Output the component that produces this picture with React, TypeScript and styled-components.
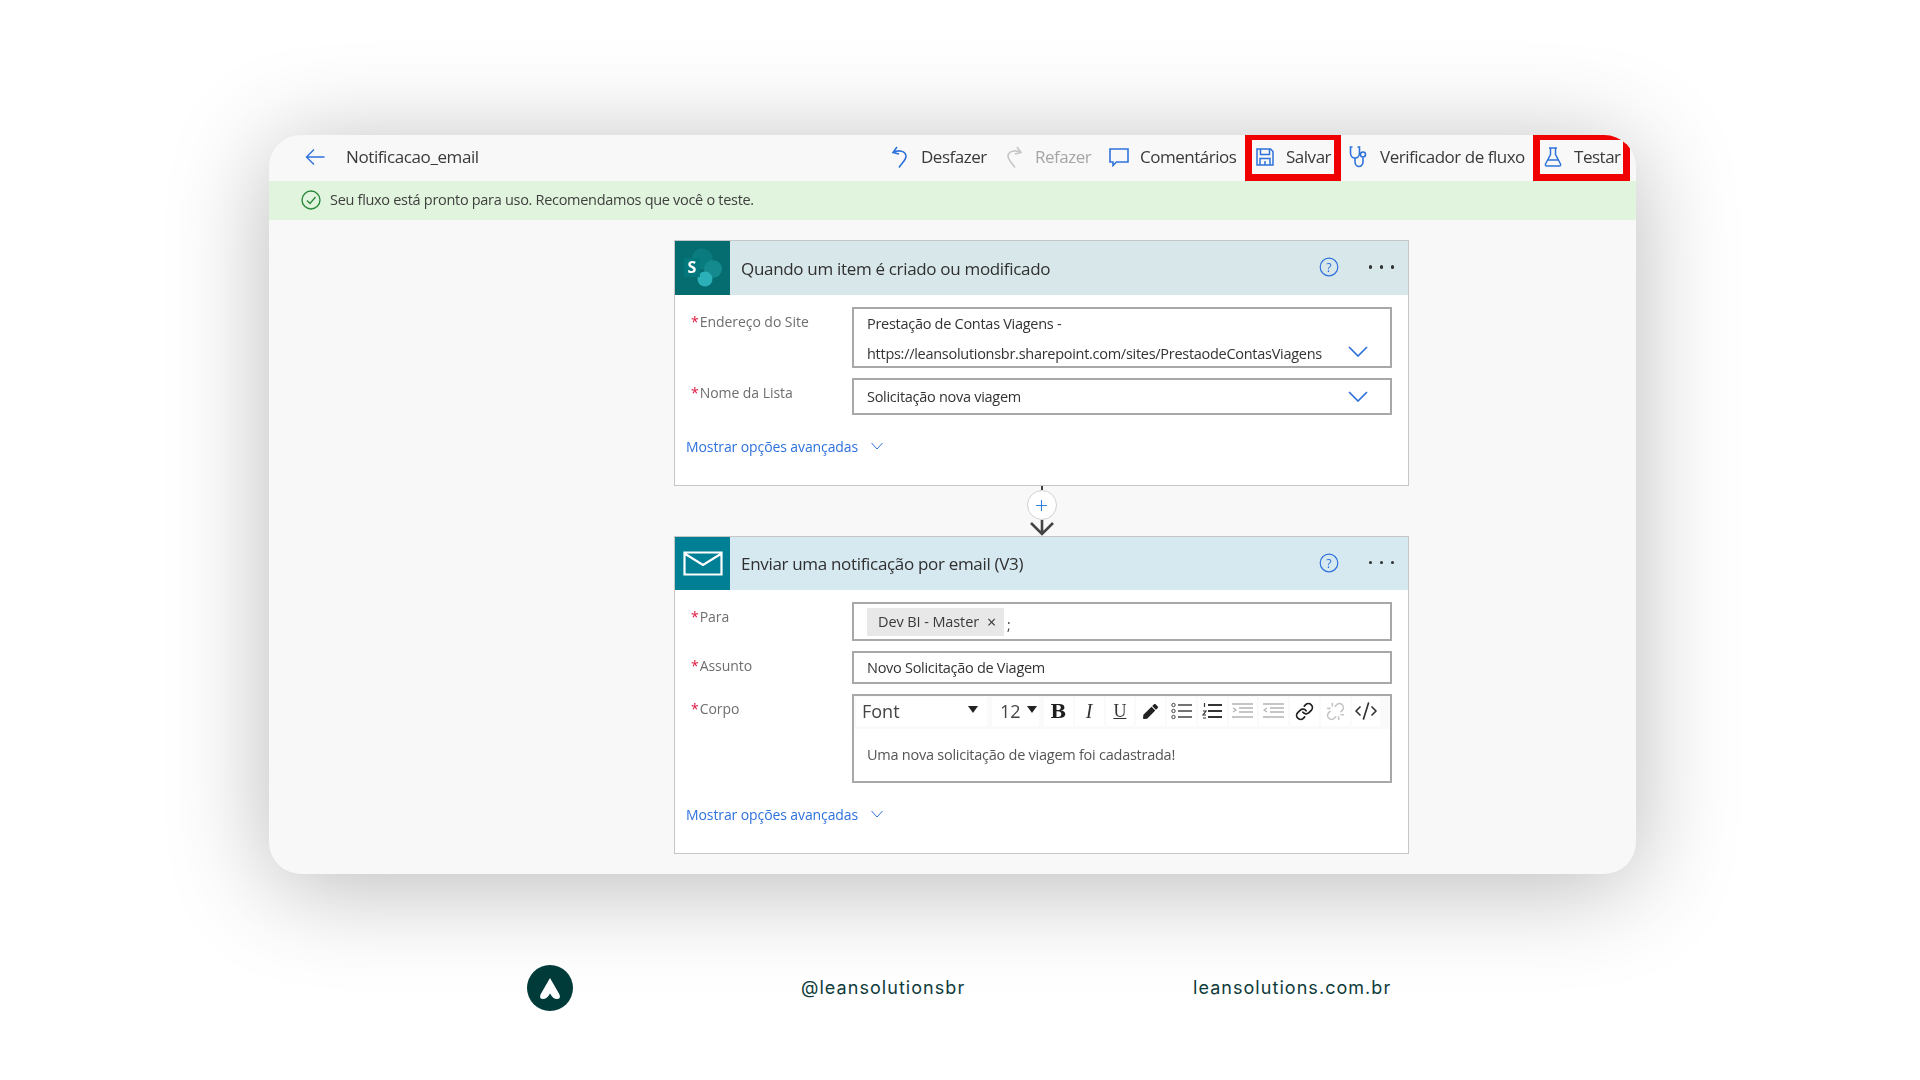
import styled, { createGlobalStyle } from "styled-components";
import { Link, Unlink, CodeXml, Plus } from "lucide-react";
import { FaPen } from "react-icons/fa";

const GlobalStyle = createGlobalStyle`
  html, body {
    margin: 0;
    background: #fff;
  }
  * {
    box-sizing: border-box;
  }
`;

const BLUE = "#2f72dc";

export default function App() {
  return (
    <Page>
      <GlobalStyle />
      <Panel>
        <Inner>
          <Toolbar>
            <BackButton>
              <svg width="20" height="18" viewBox="0 0 20 18" fill="none" stroke={BLUE} strokeWidth="1.4">
                <path d="M19.5 9H1.5M9 1.5 1.5 9 9 16.5" />
              </svg>
            </BackButton>
            <FlowName>Notificacao_email</FlowName>
            <Actions>
              <ToolButton>
                <ToolIcon>
                  <svg width="20" height="24" viewBox="0 0 20 24" fill="none" stroke={BLUE} strokeWidth="1.6">
                    <path d="M7 2 3 7.500l6 1.500M3.500 7.500c5-3 12-1.500 12.500 3.500.3 3.500-4 7-7 11.500" />
                  </svg>
                </ToolIcon>
                <ToolLabel $w={64}>Desfazer</ToolLabel>
              </ToolButton>
              <ToolButton $gap={19}>
                <ToolIcon>
                  <svg width="20" height="24" viewBox="0 0 20 24" fill="none" stroke="#c6c6c6" strokeWidth="1.6">
                    <path d="M13 2l4 5.500-6 1.500M16.500 7.500c-5-3-12-1.500-12.500 3.500-.3 3.500 4 7 7 11.500" />
                  </svg>
                </ToolIcon>
                <ToolLabel $w={56} $muted>Refazer</ToolLabel>
              </ToolButton>
              <ToolButton $gap={18}>
                <ToolIcon>
                  <svg width="20" height="20" viewBox="0 0 20 20" fill="none" stroke={BLUE} strokeWidth="1.6">
                    <path d="M1 2h18v13H7.500L4 18.500V15H1z" />
                  </svg>
                </ToolIcon>
                <ToolLabel $w={95}>Comentários</ToolLabel>
              </ToolButton>
              <ToolButton $gap={10} $marked>
                <ToolIcon>
                  <svg width="18" height="18" viewBox="0 0 18 18" fill="none" stroke={BLUE} strokeWidth="1.5">
                    <path d="M1 1h13.500L17 3.500V17H1zM4.500 1v5.500h9V1M4 17v-6.500h10V17M9 13v4" />
                  </svg>
                </ToolIcon>
                <ToolLabel $w={44}>Salvar</ToolLabel>
              </ToolButton>
              <ToolButton $gap={8}>
                <ToolIcon>
                  <svg width="20" height="22" viewBox="0 0 20 22" fill="none" stroke={BLUE} strokeWidth="1.6">
                    <path d="M3.500 1H1.500v6c0 3 2 5 4.500 5s4.500-2 4.500-5V1H8.500M6 12v3.500c0 3 2 5 4 5s4-2 4-4.500v-4.500" />
                    <circle cx="14" cy="8.500" r="2.500" />
                  </svg>
                </ToolIcon>
                <ToolLabel $w={146}>Verificador de fluxo</ToolLabel>
              </ToolButton>
              <ToolButton $gap={7} $marked>
                <ToolIcon>
                  <svg width="18" height="20" viewBox="0 0 18 20" fill="none" stroke={BLUE} strokeWidth="1.5">
                    <path d="M5 1h8M6.500 1v6.500L1.500 17c-.5 1 .2 2 1.200 2h12.600c1 0 1.700-1 1.200-2l-5-9.500V1M4 13h10" />
                  </svg>
                </ToolIcon>
                <ToolLabel $w={45}>Testar</ToolLabel>
              </ToolButton>
            </Actions>
          </Toolbar>

          <Banner>
            <svg width="20" height="20" viewBox="0 0 20 20" fill="none" stroke="#2c8a3c" strokeWidth="1.4">
              <circle cx="10" cy="10" r="9" />
              <path d="M6 10.500l3 3 5.500-6.500" />
            </svg>
            <BannerText>Seu fluxo está pronto para uso. Recomendamos que você o teste.</BannerText>
          </Banner>

          <Canvas>
            <Card>
              <CardHeader $height={54} $tint="#d8e7ea">
                <CardIcon $color="#056d70">
                  <svg width="55" height="54" viewBox="0 0 55 54">
                    <circle cx="27" cy="18" r="10.500" fill="#0a7c7f" />
                    <circle cx="38" cy="28" r="9" fill="#148a8e" />
                    <circle cx="30" cy="38" r="7.500" fill="#2bb0b8" />
                    <rect x="9" y="17" width="16" height="19" fill="#03787c" />
                    <text x="17" y="32" fontSize="16" fontWeight="700" fill="#fff" textAnchor="middle" fontFamily="Open Sans, sans-serif">S</text>
                  </svg>
                </CardIcon>
                <CardTitle>Quando um item é criado ou modificado</CardTitle>
                <HelpIcon />
                <MoreDots />
              </CardHeader>
              <CardBody>
                <Field>
                  <FieldLabel><Star>*</Star>Endereço do Site</FieldLabel>
                  <Input $height={61} $multi>
                    <MultiText>
                      <div>Prestação de Contas Viagens -</div>
                      <div>https://leansolutionsbr.sharepoint.com/sites/PrestaodeContasViagens</div>
                    </MultiText>
                    <DropChevron lifted />
                  </Input>
                </Field>
                <Field>
                  <FieldLabel><Star>*</Star>Nome da Lista</FieldLabel>
                  <Input $height={37}>
                    <InputText>Solicitação nova viagem</InputText>
                    <DropChevron />
                  </Input>
                </Field>
                <Advanced>
                  Mostrar opções avançadas
                  <svg width="12" height="8" viewBox="0 0 12 8" fill="none" stroke={BLUE} strokeWidth="1">
                    <path d="M.5 1 6 7l5.500-6" />
                  </svg>
                </Advanced>
              </CardBody>
            </Card>

            <Connector>
              <Tick />
              <AddStep>
                <Plus size={17} color="#2f80d8" strokeWidth={1.6} />
              </AddStep>
              <svg width="26" height="16" viewBox="0 0 26 16" fill="none" stroke="#444" strokeWidth="2.6">
                <path d="M13 0v14M2 3l11 11L24 3" />
              </svg>
            </Connector>

            <Card>
              <CardHeader $height={53} $tint="#d6e8f0">
                <CardIcon $color="#007f95">
                  <svg width="40" height="25" viewBox="0 0 40 25" fill="none" stroke="#fff" strokeWidth="2.200">
                    <path d="M1.500 1.500h37v22h-37zM1.500 2.500 20 14 38.500 2.500" />
                  </svg>
                </CardIcon>
                <CardTitle>Enviar uma notificação por email (V3)</CardTitle>
                <HelpIcon />
                <MoreDots />
              </CardHeader>
              <CardBody>
                <Field>
                  <FieldLabel><Star>*</Star>Para</FieldLabel>
                  <Input $height={39}>
                    <Chip>
                      Dev BI - Master
                      <ChipClose>×</ChipClose>
                    </Chip>
                    <Semi>;</Semi>
                  </Input>
                </Field>
                <Field>
                  <FieldLabel><Star>*</Star>Assunto</FieldLabel>
                  <Input $height={33}>
                    <InputText>Novo Solicitação de Viagem</InputText>
                  </Input>
                </Field>
                <Field>
                  <FieldLabel><Star>*</Star>Corpo</FieldLabel>
                  <Editor>
                    <EditorBar>
                      <DropCell $w={131} $left={6} $right={9}>
                        Font
                        <Caret />
                      </DropCell>
                      <DropCell $w={47} $left={8} $right={2}>
                        12
                        <Caret />
                      </DropCell>
                      <BarCell><BoldMark>B</BoldMark></BarCell>
                      <BarCell><ItalicMark>I</ItalicMark></BarCell>
                      <BarCell><UnderMark>U</UnderMark></BarCell>
                      <BarCell><FaPen size={15} color="#222" /></BarCell>
                      <BarCell>
                        <svg width="21" height="18" viewBox="0 0 21 18" fill="none" stroke="#444">
                          <circle cx="2.500" cy="3" r="1.700" />
                          <circle cx="2.500" cy="9" r="1.700" />
                          <circle cx="2.500" cy="15" r="1.700" />
                          <path d="M7 3h14M7 9h14M7 15h14" strokeWidth="1.400" />
                        </svg>
                      </BarCell>
                      <BarCell>
                        <svg width="20" height="18" viewBox="0 0 20 18" fill="none" stroke="#333">
                          <path d="M2.500 1v4M1 9h3L1 13h3M1 16h3" strokeWidth="1.200" />
                          <path d="M6 3h14M6 9h14M6 15h14" strokeWidth="1.800" />
                        </svg>
                      </BarCell>
                      <BarCell>
                        <svg width="21" height="18" viewBox="0 0 21 18" fill="none" stroke="#b4b4b4" strokeWidth="1.300">
                          <path d="M0 2h21M7 6h14M7 10h14M0 15h21M1 6l3 2-3 2" />
                        </svg>
                      </BarCell>
                      <BarCell>
                        <svg width="21" height="18" viewBox="0 0 21 18" fill="none" stroke="#b4b4b4" strokeWidth="1.300">
                          <path d="M0 2h21M7 6h14M7 10h14M0 15h21M4 6 1 8l3 2" />
                        </svg>
                      </BarCell>
                      <BarCell><Link size={19} color="#222" strokeWidth={2.2} /></BarCell>
                      <BarCell><Unlink size={19} color="#c4c4c4" /></BarCell>
                      <BarCell><CodeXml size={24} color="#333" strokeWidth={1.7} /></BarCell>
                    </EditorBar>
                    <EditorText>Uma nova solicitação de viagem foi cadastrada!</EditorText>
                  </Editor>
                </Field>
                <Advanced>
                  Mostrar opções avançadas
                  <svg width="12" height="8" viewBox="0 0 12 8" fill="none" stroke={BLUE} strokeWidth="1">
                    <path d="M.5 1 6 7l5.500-6" />
                  </svg>
                </Advanced>
              </CardBody>
            </Card>
          </Canvas>
        </Inner>
      </Panel>

      <Footer>
        <svg width="46" height="46" viewBox="0 0 46 46">
          <circle cx="23" cy="23" r="23" fill="#003b3a" />
          <path d="M23 13 32.500 29.500Q34 34 30 34 26 34 23 28.500 20 34 16 34 12 34 13.500 29.500Z" fill="#fff" />
        </svg>
        <FooterText>@leansolutionsbr</FooterText>
        <FooterText>leansolutions.com.br</FooterText>
      </Footer>
    </Page>
  );
}

function HelpIcon() {
  return (
    <HelpWrap>
      <svg width="20" height="20" viewBox="0 0 20 20">
        <circle cx="10" cy="10" r="8.800" fill="none" stroke={BLUE} strokeWidth="1.200" />
        <text x="10" y="14.500" fontSize="12.500" fill={BLUE} textAnchor="middle" fontFamily="Open Sans, sans-serif">?</text>
      </svg>
    </HelpWrap>
  );
}

function MoreDots() {
  return (
    <DotsWrap>
      <Dot />
      <Dot />
      <Dot />
    </DotsWrap>
  );
}

function DropChevron({ lifted }: { lifted?: boolean }) {
  return (
    <ChevronWrap $lifted={lifted}>
      <svg width="20" height="11" viewBox="0 0 20 11" fill="none" stroke={BLUE} strokeWidth="1.700">
        <path d="M1 1l9 9 9-9" />
      </svg>
    </ChevronWrap>
  );
}

const Page = styled.div`
  width: 1920px;
  height: 1080px;
  padding-top: 135px;
  overflow: hidden;
  background: #fff;
  font-family: "Open Sans", "Noto Sans", sans-serif;
`;

const Panel = styled.div`
  width: 1367px;
  height: 739px;
  margin-left: 269px;
  border-radius: 32px;
  background: #f8f8f8;
  box-shadow: 0 12px 100px rgba(0, 0, 0, 0.28);
`;

const Inner = styled.div`
  height: 100%;
  border-radius: 32px;
  overflow: hidden;
  filter: blur(0.35px);
`;

const Toolbar = styled.div`
  display: flex;
  align-items: center;
  height: 46px;
  padding: 0 6px 0 36px;
`;

const BackButton = styled.div`
  display: flex;
  width: 20px;
  margin-bottom: 3px;
`;

const FlowName = styled.div`
  margin: 0 0 3px 21px;
  font-size: 17px;
  letter-spacing: -0.4px;
  color: #3a3a3a;
  white-space: nowrap;
`;

const Actions = styled.div`
  display: flex;
  align-items: center;
  margin-left: auto;
`;

const ToolButton = styled.div<{ $gap?: number; $marked?: boolean }>`
  display: flex;
  align-items: center;
  gap: 11px;
  height: 46px;
  padding-bottom: 3px;
  margin-left: ${(p) => p.$gap ?? 0}px;
  ${(p) =>
    p.$marked &&
    `
    padding: 0 4px 1px 3px;
    border: 7px solid #f00000;
    border-top-width: 5px;
  `}
`;

const ToolIcon = styled.div`
  display: flex;
  align-items: center;
  justify-content: center;
  width: 20px;
`;

const ToolLabel = styled.div<{ $w: number; $muted?: boolean }>`
  width: ${(p) => p.$w}px;
  font-size: 17px;
  letter-spacing: -0.48px;
  white-space: nowrap;
  color: ${(p) => (p.$muted ? "#a6a6a6" : "#3a3a3a")};
`;

const Banner = styled.div`
  display: flex;
  align-items: center;
  gap: 10px;
  height: 39px;
  padding: 0 0 2px 32px;
  background: #e1f4dd;
`;

const BannerText = styled.div`
  margin-left: -1px;
  font-size: 14.5px;
  letter-spacing: -0.3px;
  color: #3f3f3f;
`;

const Canvas = styled.div`
  display: flex;
  flex-direction: column;
  padding: 20px 0 0 405px;
`;

const Card = styled.section`
  width: 735px;
  background: #fff;
  border: 1px solid #c6c6c6;
`;

const CardHeader = styled.header<{ $height: number; $tint: string }>`
  display: flex;
  align-items: center;
  height: ${(p) => p.$height}px;
  background: ${(p) => p.$tint};
`;

const CardIcon = styled.div<{ $color: string }>`
  display: flex;
  align-items: center;
  justify-content: center;
  align-self: stretch;
  width: 55px;
  background: ${(p) => p.$color};
`;

const CardTitle = styled.div`
  flex: 1;
  margin-left: 11px;
  font-size: 17px;
  letter-spacing: -0.32px;
  color: #303030;
`;

const HelpWrap = styled.div`
  display: flex;
  margin-bottom: 2px;
`;

const DotsWrap = styled.div`
  display: flex;
  gap: 7.5px;
  margin: 0 14px 2px 30px;
`;

const Dot = styled.span`
  width: 3.5px;
  height: 3.5px;
  border-radius: 50%;
  background: #333;
`;

const CardBody = styled.div`
  display: flex;
  flex-direction: column;
  gap: 10px;
  padding: 12px 16px 29px 11px;
`;

const Field = styled.div`
  display: grid;
  grid-template-columns: 166px 540px;
`;

const FieldLabel = styled.div`
  display: flex;
  padding: 5px 0 0 5px;
  font-size: 14px;
  line-height: 20px;
  letter-spacing: -0.05px;
  color: #6e6e6e;
`;

const Star = styled.span`
  margin-right: 1px;
  color: #e0143c;
`;

const Input = styled.div<{ $height: number; $multi?: boolean }>`
  display: flex;
  align-items: center;
  height: ${(p) => p.$height}px;
  padding-left: 13px;
  border: 2px solid #a8a8a8;
  background: #fff;
`;

const InputText = styled.div`
  flex: 1;
  padding-top: 1px;
  font-size: 14.5px;
  line-height: 30px;
  letter-spacing: -0.28px;
  white-space: nowrap;
  color: #333;
`;

const MultiText = styled(InputText)`
  align-self: flex-start;
  padding-top: 0;
`;

const ChevronWrap = styled.div<{ $lifted?: boolean }>`
  display: flex;
  align-self: ${(p) => (p.$lifted ? "flex-end" : "center")};
  margin: 0 22px ${(p) => (p.$lifted ? 9 : 0)}px 0;
`;

const Chip = styled.div`
  display: flex;
  align-items: center;
  height: 28px;
  padding: 0 8px 0 11px;
  background: #e8e8e8;
  font-size: 14.5px;
  letter-spacing: -0.1px;
  color: #3a3a3a;
`;

const ChipClose = styled.span`
  margin-left: 8px;
  font-size: 16px;
  color: #333;
`;

const Semi = styled.span`
  margin: 6px 0 0 3px;
  font-size: 14px;
  color: #444;
`;

const Editor = styled.div`
  height: 89px;
  border: 2px solid #a8a8a8;
  background: #fff;
`;

const EditorBar = styled.div`
  display: flex;
  align-items: center;
  gap: 2px;
  height: 33px;
  padding: 0 2px 3px;
  background: #fafafa;
`;

const DropCell = styled.div<{ $w: number; $left: number; $right: number }>`
  display: flex;
  align-items: center;
  justify-content: space-between;
  width: ${(p) => p.$w}px;
  height: 29px;
  margin-right: 3px;
  padding: 0 ${(p) => p.$right}px 0 ${(p) => p.$left}px;
  background: #fff;
  font-size: 18px;
  color: #444;
`;

const Caret = styled.span`
  width: 0;
  height: 0;
  margin-bottom: 3px;
  border-left: 5.5px solid transparent;
  border-right: 5.5px solid transparent;
  border-top: 7px solid #222;
`;

const BarCell = styled.div`
  display: flex;
  align-items: center;
  justify-content: center;
  width: 28.75px;
  height: 29px;
  background: #fff;
`;

const BoldMark = styled.span`
  font-family: "DejaVu Serif", "Liberation Serif", serif;
  font-size: 19px;
  font-weight: 700;
  color: #1e1e1e;
`;

const ItalicMark = styled.span`
  font-family: "Liberation Serif", serif;
  font-size: 20px;
  font-style: italic;
  color: #333;
`;

const UnderMark = styled.span`
  font-family: "Liberation Serif", serif;
  font-size: 18px;
  text-decoration: underline;
  color: #333;
`;

const EditorText = styled.div`
  padding: 16px 0 0 13px;
  font-size: 14.5px;
  line-height: 20px;
  letter-spacing: -0.25px;
  color: #555;
`;

const Advanced = styled.div`
  display: flex;
  align-items: center;
  gap: 13px;
  height: 20px;
  margin-top: 11px;
  font-size: 14px;
  letter-spacing: -0.1px;
  color: #2f72dc;
`;

const Connector = styled.div`
  display: flex;
  flex-direction: column;
  align-items: center;
  width: 735px;
  height: 50px;
`;

const Tick = styled.span`
  width: 2px;
  height: 4px;
  background: #444;
`;

const AddStep = styled.div`
  display: flex;
  align-items: center;
  justify-content: center;
  width: 30px;
  height: 30px;
  border-radius: 50%;
  border: 1px solid #d0d0d0;
  background: #fff;
`;

const Footer = styled.footer`
  display: grid;
  grid-template-columns: 274px 392px auto;
  align-items: center;
  height: 46px;
  margin-top: 91px;
  padding-left: 527px;
`;

const FooterText = styled.div`
  margin-bottom: 2px;
  font-family: "Inter", sans-serif;
  font-size: 18px;
  letter-spacing: 1.05px;
  color: #0e3b3a;
`;
